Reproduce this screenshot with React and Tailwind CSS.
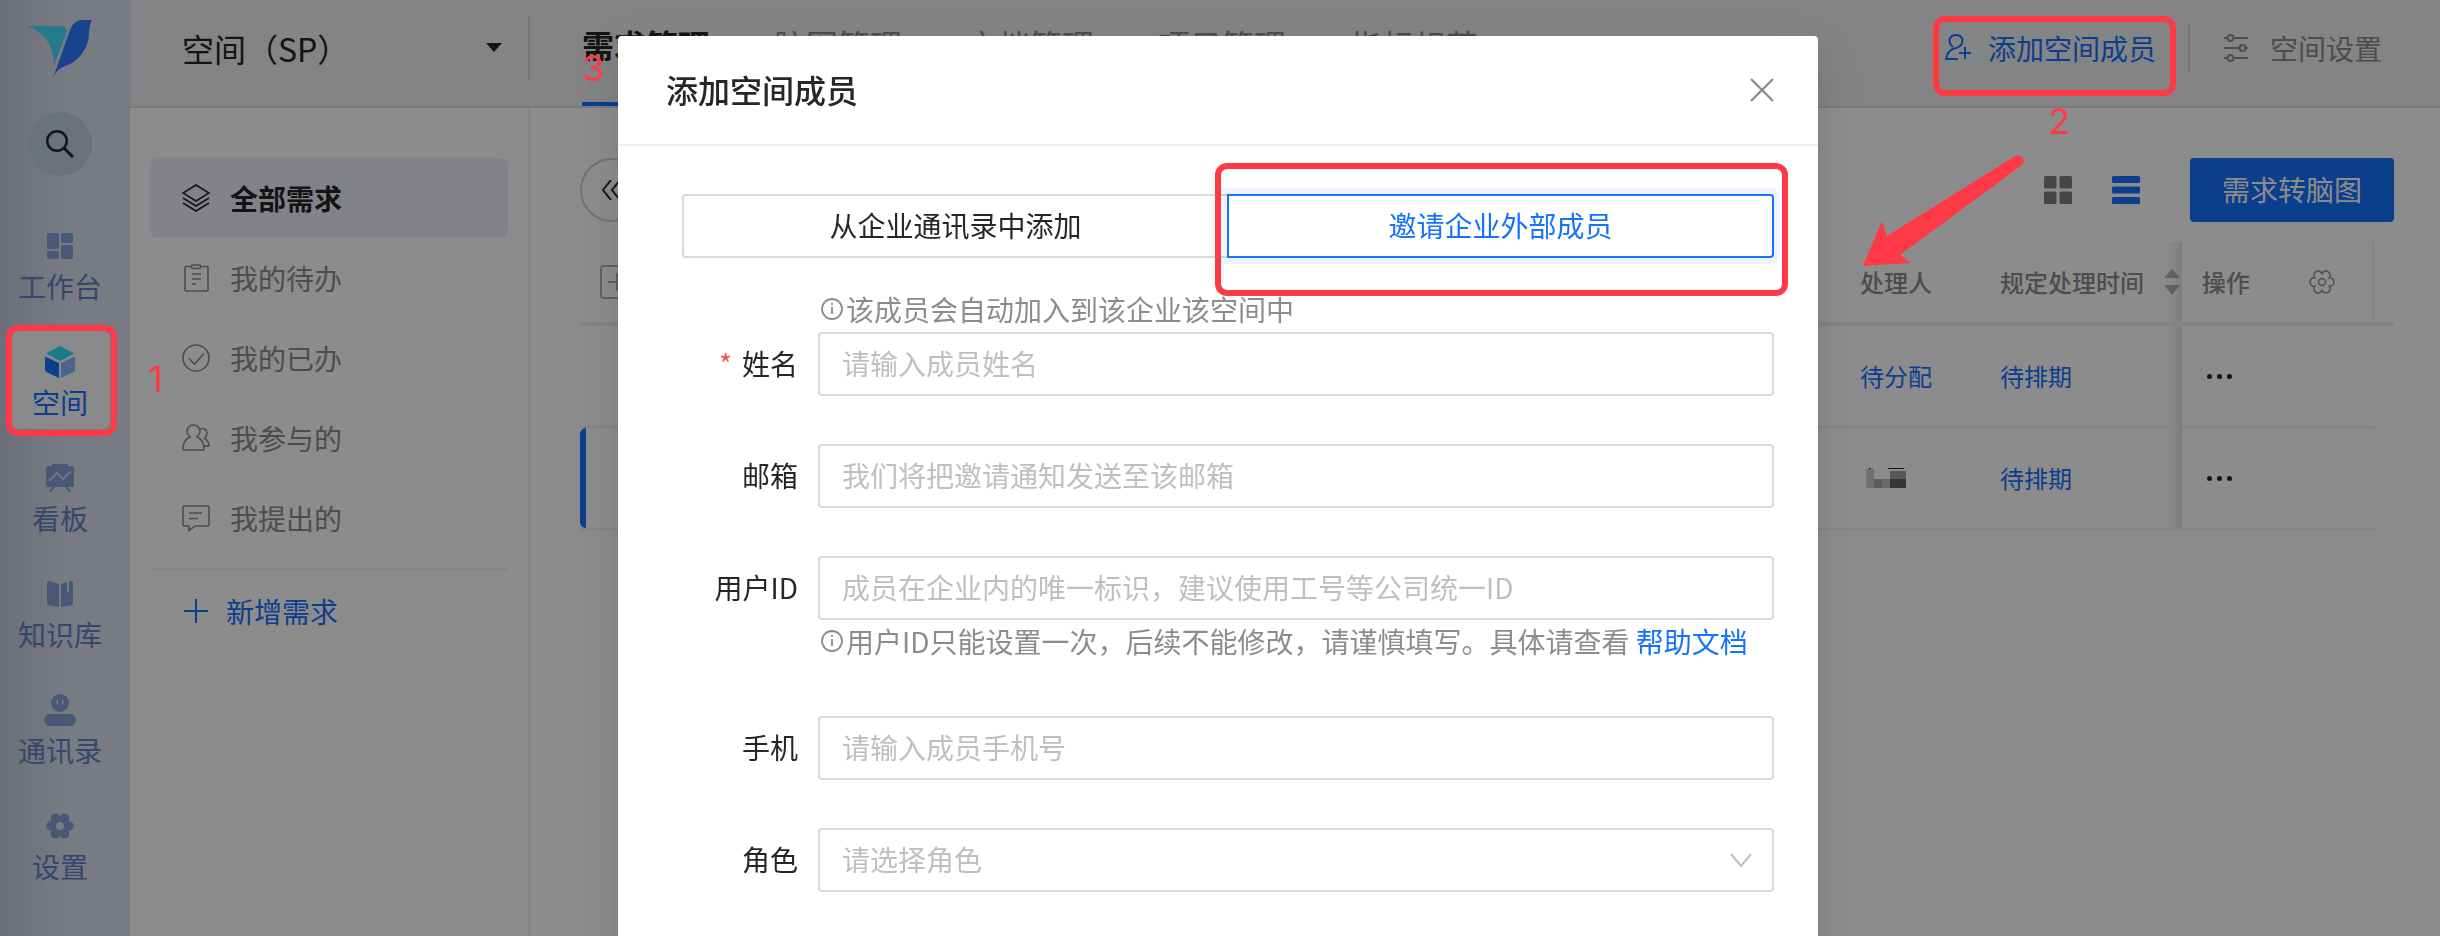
import { useState } from 'react';

const LOBED_GEAR =
    'M24.2 11.25A4.8 4.8 0 1 1 24.2 20.75A4.8 4.8 0 1 1 16 25.5A4.8 4.8 0 1 1 7.8 20.75A4.8 4.8 0 1 1 7.8 11.25A4.8 4.8 0 1 1 16 6.5A4.8 4.8 0 1 1 24.2 11.25Z';

/* SIDEBAR ICONS */

const Logo = () => (
    <svg viewBox="0 0 66 58" className="w-[66px] h-[58px]">
        <path d="M0 6H34Q42 7 39 14L27 45Q26 15 0 6Z" fill="#45deff" />
        <path d="M26 58L43 10Q47 0 55 0H65Q62 5 62 14Q61 32 45 43L34 48Q29 51 26 58Z" fill="#2a7dff" />
    </svg>
);

const BoardIcon = () => (
    <svg viewBox="0 0 32 32" className="w-8 h-8" fill="currentColor">
        <rect x="3" y="3" width="12" height="16" rx="2" />
        <rect x="3" y="21" width="12" height="8" rx="2" />
        <rect x="17" y="3" width="12" height="10" rx="2" />
        <rect x="17" y="15" width="12" height="14" rx="2" />
    </svg>
);

const CubeIcon = () => (
    <svg viewBox="0 0 32 32" className="w-8 h-8">
        <path d="M16 0L30 7.5L16 15L2 7.5Z" fill="#31deff" />
        <path d="M1 10.5L15 17V32L2.5 26Q1 25 1 23.5Z" fill="#1472ff" />
        <path d="M31 10.5L17 17V32L29.5 26Q31 25 31 23.5Z" fill="#87b9ff" />
    </svg>
);

const ChartIcon = () => (
    <svg viewBox="0 0 32 32" className="w-8 h-8">
        <path d="M8 2H24V4H28Q30 4 30 6V23Q30 25 28 25H4Q2 25 2 23V6Q2 4 4 4H8Z" fill="currentColor" />
        <path d="M10 25L5.5 29.5M22 25L26.5 29.5" stroke="currentColor" strokeWidth="2" />
        <path d="M5 19L13 11L19 17L27 9.5" stroke="#dae0f0" strokeWidth="1.7" fill="none" />
    </svg>
);

const BookIcon = () => (
    <svg viewBox="0 0 32 32" className="w-8 h-8" fill="currentColor">
        <path d="M3 5Q3 3 5 3L15 6V29L5 27.5Q3 27 3 25Z" />
        <path d="M17 6L23 4V14H25V3.5L27 3Q29 3 29 5V25Q29 27 27 27.5L17 29Z" />
    </svg>
);

const ContactIcon = () => (
    <svg viewBox="0 0 32 32" className="w-8 h-8" fill="currentColor">
        <circle cx="16" cy="9" r="9" />
        <rect x="0" y="20" width="32" height="12" rx="6" />
        <rect x="12.5" y="6" width="1.5" height="4" fill="#dae0f0" />
        <rect x="18" y="6" width="1.5" height="4" fill="#dae0f0" />
    </svg>
);

const GearIcon = () => (
    <svg viewBox="0 0 32 32" className="w-8 h-8">
        <path d={LOBED_GEAR} fill="currentColor" />
        <circle cx="16" cy="16" r="4" fill="#dae0f0" />
    </svg>
);

/* MENU ICONS */

const lineIcon = 'w-7 h-7 shrink-0';

const LayersIcon = () => (
    <svg viewBox="0 0 28 28" className={lineIcon} fill="none" stroke="currentColor" strokeWidth="1.6">
        <path d="M14 1L27 9L14 17L1 9Z" />
        <path d="M1 14L14 22L27 14M1 19L14 27L27 19" />
    </svg>
);

const ClipboardIcon = () => (
    <svg viewBox="0 0 28 28" className={lineIcon} fill="none" stroke="currentColor" strokeWidth="1.6">
        <path d="M9 2.5H4Q3 2.5 3 3.5V26Q3 27 4 27H25Q26 27 26 26V3.5Q26 2.5 25 2.5H19" />
        <rect x="9.5" y="1" width="9" height="3.5" rx="1" />
        <path d="M10 10H19M10 15H19M10 20H14" />
    </svg>
);

const CheckIcon = () => (
    <svg viewBox="0 0 28 28" className={lineIcon} fill="none" stroke="currentColor" strokeWidth="1.6">
        <circle cx="14" cy="14" r="13" />
        <path d="M7 14.5L12.5 20L22 9.5" />
    </svg>
);

const PeopleIcon = () => (
    <svg viewBox="0 0 28 28" className={lineIcon} fill="none" stroke="currentColor" strokeWidth="1.6">
        <path d="M8 13Q5 10 5 7.5A6.5 6.5 0 0 1 18 7.5Q18 10 15 13Q22 16 22 25Q22 26 21 26H2Q1 26 1 25Q1 16 8 13Z" />
        <path d="M17.5 5Q24 3 25 9Q25 12 22.5 14.5Q27 17 27 22H22" />
    </svg>
);

const MessageIcon = () => (
    <svg viewBox="0 0 28 28" className={lineIcon} fill="none" stroke="currentColor" strokeWidth="1.6">
        <path d="M2 2H26Q27 2 27 3V21Q27 22 26 22H13L7 26.5V22H2Q1 22 1 21V3Q1 2 2 2Z" />
        <path d="M7 9H20M7 14.5H16" />
    </svg>
);

const InfoIcon = () => (
    <svg viewBox="0 0 28 28" className={lineIcon} fill="none" stroke="currentColor" strokeWidth="1.8">
        <circle cx="14" cy="14" r="10" />
        <path d="M14 12V19M14 8V10" />
    </svg>
);

const sideItems = [
    { label: '工作台', icon: BoardIcon },
    { label: '空间', icon: CubeIcon, active: true },
    { label: '看板', icon: ChartIcon },
    { label: '知识库', icon: BookIcon },
    { label: '通讯录', icon: ContactIcon },
    { label: '设置', icon: GearIcon },
];

const menuItems = [
    { label: '全部需求', icon: LayersIcon, active: true },
    { label: '我的待办', icon: ClipboardIcon },
    { label: '我的已办', icon: CheckIcon },
    { label: '我参与的', icon: PeopleIcon },
    { label: '我提出的', icon: MessageIcon },
];

const tabs = ['需求管理', '脑图管理', '文档管理', '项目管理', '指标规范'];

const Sidebar = () => (
    <aside className="w-[130px] shrink-0 bg-[#dae0f0] bg-linear-to-r from-black/10 to-transparent to-50% flex flex-col items-center pt-5 pr-2.5">
        <Logo />

        <button aria-label="搜索" className="mt-[34px] w-16 h-16 rounded-full bg-[#c3cfdd] flex items-center justify-center text-[#262626]">
            <svg viewBox="0 0 28 28" className="w-7 h-7" fill="none" stroke="currentColor" strokeWidth="2.4">
                <circle cx="11" cy="11" r="9.8" />
                <path d="M18 18L27 27" strokeWidth="3" />
            </svg>
        </button>

        <nav className="mt-[39px] flex flex-col gap-[18px]">
            {sideItems.map(({ label, icon: Icon, active }) => (
                <a
                    key={label}
                    href="#"
                    className={`w-[100px] h-[98px] rounded-lg pt-[15px] flex flex-col items-center gap-2 text-[28px] leading-8 ${
                        active ? 'bg-white/90 text-[#1472ff]' : 'text-[#86a0d6]'
                    }`}
                >
                    <Icon />
                    <span className={active ? 'text-[#1472ff]' : 'text-[#6482c0]'}>{label}</span>
                </a>
            ))}
        </nav>
    </aside>
);

const TopBar = () => (
    <header className="h-[108px] bg-[#eff0f4] border-b-2 border-[#dfdfe2] flex">
        <div className="w-[400px] shrink-0 pt-4">
            <div className="relative h-16 border-r-2 border-[#d6d7da]">
                <select
                    aria-label="空间"
                    className="w-full h-full appearance-none bg-transparent pl-[52px] text-[32px] text-[#262626]"
                >
                    <option>空间（SP）</option>
                </select>
                <svg viewBox="0 0 16 10" className="absolute right-[26px] top-[27px] w-4 h-2.5 pointer-events-none" fill="#262626">
                    <path d="M0 0H16L8 9Z" />
                </svg>
            </div>
        </div>

        <nav className="flex-1 flex gap-16 pl-[52px]">
            {tabs.map((tab, i) => (
                <a
                    key={tab}
                    href="#"
                    className={`text-[32px] leading-[88px] whitespace-nowrap border-b-4 ${
                        i === 0 ? 'font-semibold text-[#262626] border-[#1472ff]' : 'text-[#8c8c8c] border-transparent'
                    }`}
                >
                    {tab}
                </a>
            ))}
        </nav>

        <div className="flex items-center gap-8 pr-[58px] pb-2.5 text-[28px] leading-[40px]">
            <button className="flex items-center gap-4 text-[#1472ff]">
                <svg viewBox="0 0 28 28" className={lineIcon} fill="none" stroke="currentColor" strokeWidth="2">
                    <path d="M9 13Q5.5 10.5 5.5 6.5Q6 1 12 1Q18 1 18.5 6.5Q18.5 12 12 14Q3 16 2 25H14" />
                    <path d="M15 19H27M21 13V25" />
                </svg>
                添加空间成员
            </button>
            <span className="w-0.5 h-12 bg-[#d6d7da]" />
            <button className="flex items-center gap-5 text-[#8c8c8c]">
                <svg viewBox="0 0 28 28" className={lineIcon} fill="none" stroke="currentColor" strokeWidth="2">
                    <path d="M2 4H5.5M11.5 4H26M2 14H17.5M23.5 14H26M2 24H5.5M11.5 24H26" />
                    <circle cx="8.5" cy="4" r="3" />
                    <circle cx="20.5" cy="14" r="3" />
                    <circle cx="8.5" cy="24" r="3" />
                </svg>
                空间设置
            </button>
        </div>
    </header>
);

const Menu = () => (
    <div className="w-[400px] shrink-0 border-r-2 border-[#f0f0f0] pt-[50px] px-5">
        <nav>
            {menuItems.map(({ label, icon: Icon, active }) => (
                <a
                    key={label}
                    href="#"
                    className={`h-20 px-8 rounded-lg flex items-center gap-5 text-[28px] leading-[40px] ${
                        active ? 'bg-[#eceef7] font-semibold text-[#262626]' : 'text-[#8c8c8c]'
                    }`}
                >
                    <Icon />
                    {label}
                </a>
            ))}
        </nav>
        <button className="w-full h-[84px] mt-2.5 px-8 border-t-2 border-[#f0f0f0] flex items-center gap-4 text-[28px] leading-[40px] text-[#1472ff]">
            <svg viewBox="0 0 28 28" className={lineIcon} stroke="currentColor" strokeWidth="2">
                <path d="M2 14H26M14 2V26" />
            </svg>
            新增需求
        </button>
    </div>
);

const RowMenu = () => (
    <button aria-label="更多" className="flex gap-[5px] pl-[5px] align-middle">
        <span className="w-[5px] h-[5px] rounded-full bg-[#262626]" />
        <span className="w-[5px] h-[5px] rounded-full bg-[#262626]" />
        <span className="w-[5px] h-[5px] rounded-full bg-[#262626]" />
    </button>
);

const StickyShadow = () => (
    <span className="absolute inset-y-0 right-0 w-[60px] shadow-[inset_-20px_0_16px_-16px_rgba(0,0,0,0.15)]" />
);

const RequirementTable = () => (
    <div className="mt-5 flex">
        <table className="flex-1 w-full table-fixed border-separate border-spacing-0 text-left text-[24px] leading-[36px]">
            <colgroup>
                <col />
                <col className="w-[140px]" />
                <col className="w-[202px]" />
                <col className="w-[192px]" />
            </colgroup>
            <thead>
                <tr className="h-[84px] text-[#8c8c8c]">
                    <th className="border-b-4 border-[#f0f0f0] pl-5">
                        <svg viewBox="0 0 34 34" className="w-[34px] h-[34px]" fill="none" stroke="#b0b0b0" strokeWidth="2">
                            <rect x="1" y="1" width="32" height="32" rx="3" />
                            <path d="M8 17H26M17 8V26" />
                        </svg>
                    </th>
                    <th className="border-b-4 border-[#f0f0f0] pl-5 font-medium">处理人</th>
                    <th className="relative border-b-4 border-[#f0f0f0] pl-5 font-medium">
                        <div className="flex items-center gap-5 whitespace-nowrap">
                            规定处理时间
                            <svg viewBox="0 0 16 28" className="w-4 h-7 shrink-0" fill="#b4b4b4">
                                <path d="M0 10L8 1L16 10ZM0 17H16L8 27Z" />
                            </svg>
                        </div>
                        <StickyShadow />
                    </th>
                    <th className="border-b-4 border-r-2 border-[#f0f0f0] pl-5 font-medium">
                        <div className="flex items-center justify-between pr-9">
                            操作
                            <svg viewBox="0 0 32 32" className="w-7 h-7" fill="none" stroke="currentColor" strokeWidth="1.6">
                                <path d={LOBED_GEAR} />
                                <circle cx="16" cy="16" r="4" />
                            </svg>
                        </div>
                    </th>
                </tr>
            </thead>
            <tbody>
                <tr className="h-[102px]">
                    <td className="border-b-2 border-[#f0f0f0]" />
                    <td className="border-b-2 border-[#f0f0f0] pl-5 text-[#1472ff]">待分配</td>
                    <td className="relative border-b-2 border-[#f0f0f0] pl-5 text-[#1472ff]">
                        待排期
                        <StickyShadow />
                    </td>
                    <td className="border-b-2 border-[#f0f0f0] pl-5"><RowMenu /></td>
                </tr>
                <tr className="h-[102px]">
                    <td className="relative border-b-2 border-[#f0f0f0]">
                        <span className="absolute inset-y-0 left-0 w-1.5 rounded-l-md bg-[#1472ff]" />
                    </td>
                    <td className="border-b-2 border-[#f0f0f0] pl-5">
                        {/* masked user name */}
                        <svg viewBox="0 0 46 20" className="w-[46px] h-5">
                            <rect x="6" y="1" width="8" height="19" fill="#cacaca" />
                            <rect x="14" y="11" width="8" height="9" fill="#a8a8a8" />
                            <rect x="22" y="11" width="8" height="9" fill="#c0c0c0" />
                            <rect x="30" y="3" width="16" height="8" fill="#a0a0a0" />
                            <rect x="30" y="11" width="16" height="9" fill="#606060" />
                            <rect x="28" y="0" width="16" height="1" fill="#262626" />
                            <rect x="9" y="0" width="2" height="1" fill="#262626" />
                        </svg>
                    </td>
                    <td className="relative border-b-2 border-[#f0f0f0] pl-5 text-[#1472ff]">
                        待排期
                        <StickyShadow />
                    </td>
                    <td className="border-b-2 border-[#f0f0f0] pl-5"><RowMenu /></td>
                </tr>
            </tbody>
        </table>
        <div className="w-5 h-[84px] shrink-0 border-b-4 border-[#f0f0f0]" />
    </div>
);

const Main = () => (
    <main className="flex-1 min-w-0 pt-[50px] pl-[50px] pr-[46px]">
        <div className="flex items-center justify-between">
            <button aria-label="收起" className="w-16 h-16 rounded-full border-2 border-[#d0d0d0] flex items-center justify-center">
                <svg viewBox="0 0 20 20" className="w-5 h-5" fill="none" stroke="#262626" strokeWidth="2">
                    <path d="M9 0L1 10L9 20M18 0L10 10L18 20" />
                </svg>
            </button>
            <div className="flex items-center">
                <button aria-label="卡片视图" className="mr-10">
                    <svg viewBox="0 0 28 28" className="w-7 h-7" fill="#808080">
                        <rect width="12.5" height="12.5" rx="1.5" />
                        <rect x="15.5" width="12.5" height="12.5" rx="1.5" />
                        <rect y="15.5" width="12.5" height="12.5" rx="1.5" />
                        <rect x="15.5" y="15.5" width="12.5" height="12.5" rx="1.5" />
                    </svg>
                </button>
                <button aria-label="列表视图" className="mr-[50px]">
                    <svg viewBox="0 0 28 28" className="w-7 h-7" fill="#1472ff">
                        <rect width="28" height="7" rx="1.5" />
                        <rect y="10.5" width="28" height="7" rx="1.5" />
                        <rect y="21" width="28" height="7" rx="1.5" />
                    </svg>
                </button>
                <button className="h-16 px-8 pb-0.5 rounded bg-[#1472ff] text-white text-[28px] leading-[40px]">需求转脑图</button>
            </div>
        </div>
        <RequirementTable />
    </main>
);

/* ADD MEMBER MODAL */

const fieldClass = 'flex-1 min-w-0 h-16 px-[22px] pb-0.5 border-2 border-[#d9d9d9] rounded bg-white text-[28px] leading-[40px] placeholder:text-[#bfbfbf] outline-none';

const Field = ({ id, label, required, children }) => (
    <div className="flex items-center">
        <label htmlFor={id} className="w-[116px] mr-5 pb-0.5 shrink-0 text-right text-[28px] leading-[44px] text-[#262626]">
            {required && <span className="mr-2.5 text-[#ff4d4f]">*</span>}
            {label}
        </label>
        {children}
    </div>
);

const Hint = ({ children }) => (
    <p className="ml-[136px] flex items-center text-[28px] leading-[42px] pb-0.5 text-[#8c8c8c] whitespace-pre">
        <InfoIcon />
        {children}
    </p>
);

const AddMemberModal = () => {

    const [form, setForm] = useState({ name: '', email: '', userId: '', phone: '' });

    const bind = (key) => ({
        id: key,
        value: form[key],
        onChange: (e) => setForm({ ...form, [key]: e.target.value }),
    });

    return (
        <div
            role="dialog"
            aria-label="添加空间成员"
            className="relative w-[1200px] mt-9 bg-white rounded shadow-[0_6px_12px_-8px_rgba(0,0,0,0.12),0_12px_32px_0_rgba(0,0,0,0.08),0_18px_56px_16px_rgba(0,0,0,0.05)]"
        >
            <div className="h-[110px] pl-12 pr-11 border-b-2 border-[#f0f0f0] flex items-center justify-between">
                <h2 className="pb-0.5 text-[32px] leading-[44px] font-medium text-[#262626]">添加空间成员</h2>
                <button aria-label="关闭">
                    <svg viewBox="0 0 24 24" className="w-6 h-6" fill="none" stroke="#8c8c8c" strokeWidth="2.4">
                        <path d="M1 1L23 23M23 1L1 23" />
                    </svg>
                </button>
            </div>

            <form className="pt-12 pl-16 pr-11 pb-24">
                <div className="flex text-[28px] leading-[40px]">
                    <button type="button" className="flex-1 h-16 pb-0.5 border-2 border-[#d9d9d9] rounded-l text-[#262626]">
                        从企业通讯录中添加
                    </button>
                    <button
                        type="button"
                        className="relative -ml-0.5 flex-1 h-16 pb-0.5 border-2 border-[#1472ff] rounded-r text-[#1472ff] ring-6 ring-[#1472ff]/8"
                    >
                        邀请企业外部成员
                        <span className="absolute -top-[33px] -left-[14px] -right-4 -bottom-10 border-6 border-[#ff3a46] rounded-xl" />
                    </button>
                </div>

                <div className="mt-[30px] flex flex-col gap-12">
                    <div>
                        <Hint>该成员会自动加入到该企业该空间中</Hint>
                        <Field id="name" label="姓名" required>
                            <input {...bind('name')} placeholder="请输入成员姓名" className={fieldClass} />
                        </Field>
                    </div>
                    <Field id="email" label="邮箱">
                        <input {...bind('email')} placeholder="我们将把邀请通知发送至该邮箱" className={fieldClass} />
                    </Field>
                    <div className="pb-1">
                        <Field id="userId" label="用户ID">
                            <input {...bind('userId')} placeholder="成员在企业内的唯一标识，建议使用工号等公司统一ID" className={fieldClass} />
                        </Field>
                        <Hint>
                            用户ID只能设置一次，后续不能修改，请谨慎填写。具体请查看{' '}
                            <a href="#" className="text-[#1472ff]">帮助文档</a>
                        </Hint>
                    </div>
                    <Field id="phone" label="手机">
                        <input {...bind('phone')} placeholder="请输入成员手机号" className={fieldClass} />
                    </Field>
                    <Field id="role" label="角色">
                        <div className="relative flex-1 flex">
                            <select id="role" className={`${fieldClass} appearance-none text-[#bfbfbf]`}>
                                <option>请选择角色</option>
                            </select>
                            <svg viewBox="0 0 22 16" className="absolute right-[22px] top-6 w-[22px] h-4 pointer-events-none" fill="none" stroke="#bfbfbf" strokeWidth="2">
                                <path d="M1 2L11 14L21 2" />
                            </svg>
                        </div>
                    </Field>
                </div>
            </form>

            <span className="absolute -left-9 top-2.5 font-[Inter] text-[36px] leading-[44px] text-[#ff3a46]">3</span>
        </div>
    );
};

/* STEP MARKS */

const StepMarks = () => (
    <div className="absolute inset-0 pointer-events-none font-[Inter] text-[36px] leading-[44px] text-[#ff3a46]">
        <div className="absolute left-1.5 top-[325px] w-[111px] h-[111px] border-6 border-[#ff3a46] rounded-xl" />
        <span className="absolute left-[148px] top-[357px]">1</span>

        <div className="absolute right-[264px] top-4 w-[243px] h-20 border-6 border-[#ff3a46] rounded-xl" />
        <span className="absolute right-[370px] top-[99px]">2</span>
        <svg viewBox="0 0 162 112" className="absolute right-[416px] top-[155px] w-[162px] h-[112px]" fill="#ff3a46">
            <path d="M1 111L20 66L25 81L153 1Q158 -1 161 3Q163 7 160 10L38 100L49 108Z" />
        </svg>
    </div>
);

const App = () => (
    <div className="relative min-h-screen overflow-hidden bg-white flex font-['Noto_Sans_CJK_SC',sans-serif]">
        <Sidebar />
        <div className="flex-1 min-w-0 flex flex-col">
            <TopBar />
            <div className="flex-1 flex">
                <Menu />
                <Main />
            </div>
        </div>

        <div className="fixed inset-0 overflow-hidden bg-black/45 flex justify-center items-start pr-1">
            <AddMemberModal />
        </div>

        <StepMarks />
    </div>
);

export default App;
